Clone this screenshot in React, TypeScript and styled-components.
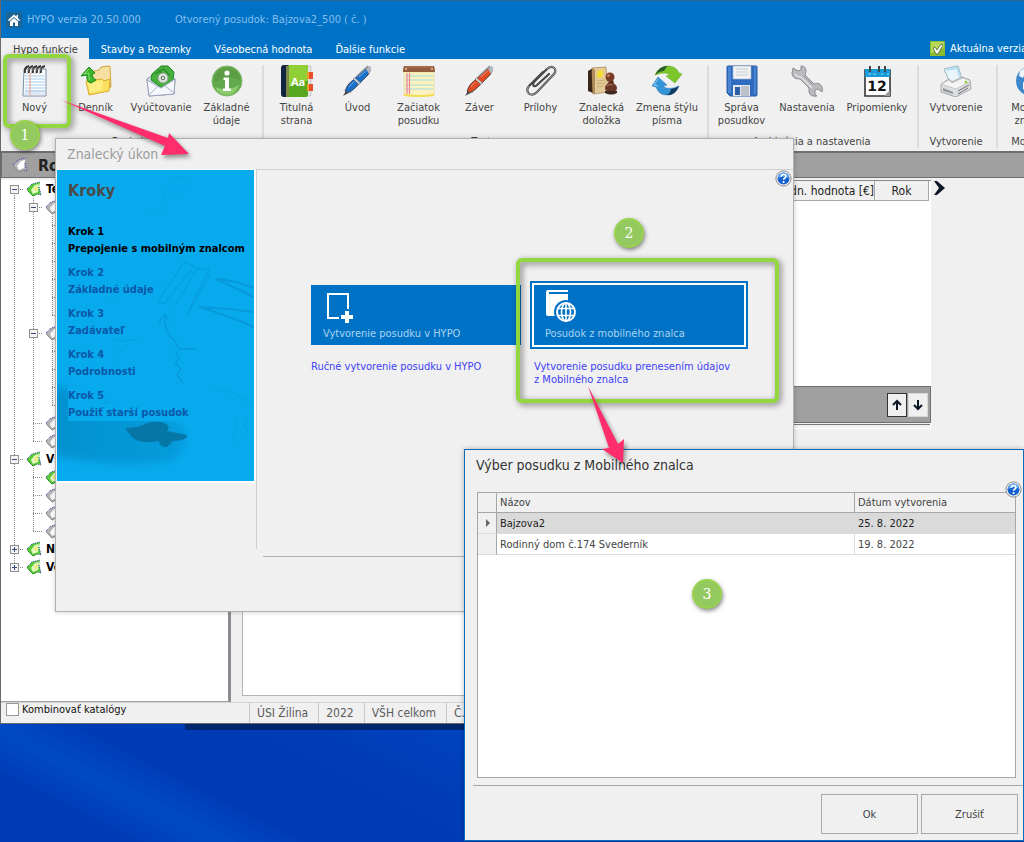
import React from 'react';
import styled, { createGlobalStyle, css } from 'styled-components';

const Global = createGlobalStyle`
  * { box-sizing: border-box; }
  body {
    margin: 0;
    font-family: "DejaVu Sans Condensed", "DejaVu Sans", sans-serif;
    font-size: 11px;
    line-height: 13px;
    color: #444;
  }
  button, input { font: inherit; color: inherit; }
  button { cursor: pointer; }
`;

const Desktop = styled.div`
  position: relative;
  min-height: 100vh;
  padding-bottom: 118px;
  display: flex;
  flex-direction: column;
  overflow: hidden;
  background:
    linear-gradient(#00266e, #00266e) 185px calc(100% - 112px) / 300px 6px no-repeat,
    linear-gradient(207deg, #0044c0 0%, #003cb8 26%, #003ab6 56%, #004ac6 69%, #003ab6 82%) 0 100% / 480px 118px no-repeat,
    #003ab6;
`;

/* ---------- main window ---------- */

const AppWindow = styled.main`
  flex: 1;
  display: flex;
  flex-direction: column;
  min-width: 0;
  background: #f0f0f0;
  border: 1px solid #6a6a6a;
  border-right: 0;
  border-top-color: #2a6898;
`;

const TitleBar = styled.header`
  height: 37px;
  padding-left: 5px;
  display: flex;
  align-items: center;
  background: #0072c6;
  color: #83bfee;
`;

const HomeButton = styled.button`
  width: 16px;
  height: 16px;
  padding: 0;
  border: 0;
  display: grid;
  place-items: center;
  background: #1c6594;
`;

const AppName = styled.span`
  width: 148px;
  margin-left: 5px;
  white-space: nowrap;
`;

const TabRow = styled.nav`
  height: 21px;
  display: flex;
  background: #0072c6;
  white-space: nowrap;
`;

const Tab = styled.button<{ $active?: boolean }>`
  padding: 1px 11px 0 12px;
  border: 0;
  background: ${(p) => (p.$active ? '#f0f0f0' : 'transparent')};
  color: ${(p) => (p.$active ? '#3c3c3c' : '#fff')};
`;

const VersionNote = styled.span`
  margin-left: auto;
  width: 94px;
  flex: none;
  display: flex;
  align-items: center;
  gap: 5px;
  overflow: hidden;
  color: #fff;
  svg { flex: none; }
`;

const Ribbon = styled.section`
  height: 92px;
  display: flex;
  padding: 6px 0 3px 1px;
  overflow: hidden;
`;

const RibbonGroup = styled.div`
  flex: none;
  display: flex;
  flex-direction: column;
  padding: 0 5px 0 2px;
  border-right: 2px solid #dcdcdc;
`;

const RibbonButtons = styled.div`
  flex: 1;
  display: flex;
`;

const RibbonButton = styled.button<{ $wide?: boolean }>`
  width: ${(p) => (p.$wide ? 70 : 61)}px;
  padding: 0;
  border: 0;
  background: none;
  display: flex;
  flex-direction: column;
  align-items: center;
  gap: 4px;
  white-space: pre-line;
  svg { flex: none; }
`;

const GroupCaption = styled.div`
  text-align: center;
  white-space: nowrap;
`;

const SectionBar = styled.div`
  height: 27px;
  padding-left: 8px;
  display: flex;
  align-items: center;
  gap: 10px;
  background: #a0a0a0;
  border: solid #6e6e6e;
  border-width: 2px 0 1px 1px;
  color: #222;
  font-size: 16px;
  font-weight: bold;
`;

const Workspace = styled.div`
  flex: 1;
  display: flex;
  padding-top: 2px;
  min-height: 0;
`;

const TreePanel = styled.aside`
  width: 230px;
  flex: none;
  background: #fff;
  border-right: 3px solid #8a8e92;
  border-bottom: 1px solid #a0a0a0;
`;

const TreeList = styled.ul`
  list-style: none;
  margin: 0;
  padding: 0 0 0 4px;
`;

const TreeRow = styled.li`
  height: 18px;
  display: flex;
  align-items: center;
  color: #000;
  font-weight: bold;
  white-space: nowrap;
  overflow: hidden;
`;

type Guide = 'full' | 'upper' | 'lower' | 'none';

const guideSize = { full: '100%', upper: '50%', lower: '50%', none: '0' };

const GuideCell = styled.span<{ $guide: Guide; $branch?: boolean }>`
  width: 19px;
  height: 18px;
  flex: none;
  display: grid;
  place-items: center;
  background:
    repeating-linear-gradient(#888 0 1px, transparent 1px 2px) 9px ${(p) => (p.$guide === 'lower' ? '100%' : '0')} / 1px ${(p) => guideSize[p.$guide]} no-repeat
    ${(p) => p.$branch && css`, repeating-linear-gradient(90deg, #888 0 1px, transparent 1px 2px) 9px 9px / 10px 1px no-repeat`};
`;

const Expander = styled.button`
  width: 9px;
  height: 9px;
  padding: 0;
  border: 1px solid #919191;
  background: #f4f4f4;
  display: grid;
  place-items: center;
`;

const TreeLabel = styled.span`
  margin-left: 4px;
  font-size: 12px;
`;

const NodeIcon = styled.svg`
  margin-left: 2px;
  flex: none;
`;

const Details = styled.section`
  flex: 1;
  min-width: 0;
  margin-left: 11px;
  display: flex;
  flex-direction: column;
  padding-bottom: 6px;
`;

const ListArea = styled.div`
  display: flex;
`;

const ListColumn = styled.div`
  flex: 1;
  min-width: 0;
`;

const ListSide = styled.div`
  width: 93px;
  flex: none;
`;

const ListBox = styled.div`
  height: 206px;
  padding-right: 2px;
  background: #fff;
  border-top: 1px solid #8a8a8a;
`;

const ValueTable = styled.table`
  width: 100%;
  border-collapse: collapse;
  th {
    height: 19px;
    padding: 2px 0 0;
    font-size: 12px;
    font-weight: normal;
    color: #222;
    text-align: right;
    background: #f0f0f0;
    border: solid #a8a8a8;
    border-width: 0 1px 1px 0;
  }
  th:last-child { width: 54px; text-align: center; }
`;

const MoveBar = styled.div`
  height: 37px;
  padding-right: 2px;
  display: flex;
  justify-content: flex-end;
  align-items: center;
  gap: 1px;
  background: #a0a0a0;
  border: 1px solid #6e6e6e;
`;

const BarRule = styled.div`
  height: 6px;
  border: solid #fff;
  border-width: 0 1px 1px 0;
  background: linear-gradient(#777, #777) 0 1px / 100% 1px no-repeat;
`;

const MoveButton = styled.button<{ $current?: boolean }>`
  width: 20px;
  height: 24px;
  padding: 0;
  display: grid;
  place-items: center;
  background: #f0f0f0;
  border: 1px solid ${(p) => (p.$current ? '#333' : '#d8d8d8')};
`;

const NextButton = styled.button`
  padding: 0;
  margin: 0 0 0 2px;
  border: 0;
  background: none;
  display: block;
`;

const EditorBox = styled.div`
  flex: 1;
  margin-top: 36px;
  background: #fff;
  border: solid #b4b4b4;
  border-width: 0 0 1px 1px;
`;

const StatusBar = styled.footer`
  height: 21px;
  display: flex;
  border-top: 1px solid #d4d4d4;
  font-size: 12px;
  color: #5c5c5c;
  overflow: hidden;
`;

const CheckLabel = styled.label`
  width: 248px;
  height: 13px;
  padding-left: 5px;
  display: flex;
  align-items: center;
  gap: 3px;
  font-size: 11px;
  line-height: 11px;
  color: #111;
  input {
    appearance: none;
    width: 13px;
    height: 13px;
    margin: 0;
    background: #fff;
    border: 1px solid #999;
  }
`;

const StatusCell = styled.span`
  padding: 4px 10px 0 7px;
  border-left: 1px solid #c8c8c8;
  white-space: nowrap;
`;

/* ---------- dialogs ---------- */

const TaskDialog = styled.section`
  position: absolute;
  left: 55px;
  top: 138px;
  width: 739px;
  height: 474px;
  display: flex;
  flex-direction: column;
  background: #f0f0f0;
  border: 1px solid #b0b0b0;
  box-shadow: 0 0 5px #0003;
`;

const DialogTitle = styled.h2<{ $muted?: boolean }>`
  margin: 0;
  height: 30px;
  padding: 0 11px;
  flex: none;
  font-size: 14px;
  line-height: 30px;
  font-weight: normal;
  color: ${(p) => (p.$muted ? '#9c9c9c' : '#333')};
`;

const HelpButton = styled.button`
  position: absolute;
  right: 1px;
  top: 31px;
  padding: 0;
  border: 0;
  background: none;
  display: block;
  svg { display: block; }
`;

const TaskBody = styled.div`
  display: flex;
  height: 380px;
  padding-left: 1px;
`;

const StepsPanel = styled.aside`
  position: relative;
  width: 199px;
  height: 314px;
  padding: 11px;
  border: solid #fff;
  border-width: 1px 2px 2px 0;
  background: #08aaee;
`;

const StepsArt = styled.svg`
  position: absolute;
  left: 0;
  top: 0;
`;

const StepsTitle = styled.h3`
  position: relative;
  margin: 0 0 22px;
  font-size: 16px;
  line-height: 20px;
  color: #4a4a4a;
`;

const StepList = styled.ol`
  position: relative;
  list-style: none;
  margin: 0;
  padding: 0;
  display: grid;
  gap: 7px;
`;

const Step = styled.li<{ $current?: boolean }>`
  line-height: 17px;
  font-weight: bold;
  white-space: nowrap;
  color: ${(p) => (p.$current ? '#000' : '#0a58a8')};
  div { width: max-content; background: #08aaee; }
`;

const ChoiceArea = styled.div`
  flex: 1;
  padding: 111px 45px 0 54px;
  border: solid #cfcfcf;
  border-width: 1px 0 0 1px;
  display: grid;
  grid-template-columns: 210px 218px;
  gap: 9px;
  align-items: start;
`;

const Choice = styled.div`
  display: flex;
  flex-direction: column;
`;

const ChoiceTile = styled.button<{ $selected?: boolean }>`
  height: ${(p) => (p.$selected ? 68 : 60)}px;
  margin: ${(p) => (p.$selected ? '0' : '4px 0')};
  padding: ${(p) => (p.$selected ? '7px 13px' : '7px 12px 5px')};
  display: flex;
  flex-direction: column;
  align-items: flex-start;
  justify-content: space-between;
  background: #0072c6;
  color: #a9d2f0;
  border: ${(p) => (p.$selected ? '2px solid #0072c6' : '0')};
  box-shadow: ${(p) => (p.$selected ? 'inset 0 0 0 2px #fff' : 'none')};
  svg { display: block; flex: none; }
`;

const ChoiceNote = styled.p<{ $inset?: boolean }>`
  margin: 11px 0 0 ${(p) => (p.$inset ? 4 : 0)}px;
  white-space: pre-line;
  color: #4040f8;
`;

const TaskRule = styled.hr`
  width: calc(100% - 207px);
  margin: 7px 0 0 207px;
  border: 0;
  border-top: 1px solid #b0b0b0;
`;

const PickDialog = styled.section`
  position: absolute;
  right: 0;
  top: 449px;
  width: 560px;
  height: 392px;
  display: flex;
  flex-direction: column;
  background: #f0f0f0;
  border: 1px solid #0a6cba;
  box-shadow: 0 0 5px #0004;
`;

const PickBody = styled.div`
  flex: 1;
  margin: 12px 7px 7px 12px;
  background: #fff;
  border: 1px solid #a6a6a6;
`;

const PickTable = styled.table`
  width: 100%;
  table-layout: fixed;
  border-collapse: separate;
  border-spacing: 0;
  text-align: left;
  th, td {
    height: 21px;
    padding: 0 0 0 3px;
    font-weight: normal;
    border: solid #dcdcdc;
    border-width: 0 0 1px 1px;
  }
  thead th {
    height: 20px;
    background: #f0f0f0;
    border-color: #a6a6a6;
  }
  th:first-child {
    width: 18px;
    padding: 0 0 0 7px;
    border-left: 0;
    background: #f0f0f0;
  }
  thead th:last-child { width: 161px; }
  td:nth-child(2) { border-left-color: #a6a6a6; }
`;

const PickRow = styled.tr<{ $selected?: boolean }>`
  td { background: ${(p) => (p.$selected ? '#dadada' : '#fff')}; }
  color: ${(p) => (p.$selected ? '#222' : '#444')};
`;

const PickActions = styled.footer`
  margin-left: 8px;
  padding: 8px 5px 6px;
  display: flex;
  justify-content: flex-end;
  gap: 3px;
  border-top: 1px solid #a6a6a6;
`;

const ActionButton = styled.button`
  width: 97px;
  height: 40px;
  background: #f0f0f0;
  border: 1px solid #a8a8a8;
`;

/* ---------- annotations ---------- */

const Highlight = styled.div<{ $x: number; $y: number; $w: number; $h: number }>`
  position: absolute;
  left: ${(p) => p.$x}px;
  top: ${(p) => p.$y}px;
  width: ${(p) => p.$w}px;
  height: ${(p) => p.$h}px;
  border: 4px solid #93d640;
  border-radius: 6px;
  filter: drop-shadow(2px 2px 3px #0008);
  pointer-events: none;
`;

const NumberBadge = styled.span<{ $x: number; $y: number }>`
  position: absolute;
  left: ${(p) => p.$x}px;
  top: ${(p) => p.$y}px;
  width: 30px;
  height: 30px;
  border-radius: 50%;
  background: #94c95f;
  border: 2px solid #98d34c;
  box-shadow: 1px 2px 4px #0007;
  color: #fff;
  font: 14px/26px "DejaVu Serif", serif;
  text-align: center;
`;

const Arrows = styled.svg`
  position: absolute;
  left: 0;
  top: 0;
  filter: drop-shadow(2px 3px 2px #0006);
  pointer-events: none;
`;

/* ---------- icons ---------- */

const Icon = ({ children }: { children: React.ReactNode }) => (
  <svg width="32" height="32" viewBox="0 0 32 32" aria-hidden="true">{children}</svg>
);

const NotepadIcon = () => (
  <Icon>
    <path d="M5 4h22v27H4z" fill="#fff" stroke="#7d8fa8" />
    <path d="M6 25h20v5H5z" fill="#e0e8f4" />
    <path d="M6 11h20M6 14h20M6 17h20M6 20h20M6 23h20M6 26h20" stroke="#9fcaf0" strokeWidth="1" />
    <path d="M11 8v22" stroke="#f09a80" />
    <path d="M6 8q-1-6 4-7M10 8q-1-6 4-7M14 8q-1-6 4-7M18 8q-1-6 4-7M22 8q-1-6 4-7" fill="none" stroke="#333" strokeWidth="1.900" />
    <path d="M8 9q0-5 4-6M12 9q0-5 4-6M16 9q0-5 4-6M20 9q0-5 4-6" fill="none" stroke="#999" strokeWidth=".8" />
  </Icon>
);

const FolderIcon = () => (
  <Icon>
    <path d="M11 7l8-2 2-3 9-1 1 21-20 7z" fill="#f5e0a0" stroke="#d2a53c" />
    <path d="M6 16l16-2 2 2 6-2-1 12-20 4z" fill="#fbe060" stroke="#d9ac2c" />
    <path d="M8 18l15-3-1 10-12 3z" fill="#fdf08c" opacity=".8" />
    <path d="M11 18q-5-1-4-8l-6 1 8-9 6 6-3 1q0 4 4 6z" fill="#3cb52c" stroke="#1d8a18" />
    <path d="M9 4l-5 5 5-1q-1 4 1 7" fill="none" stroke="#8be070" />
  </Icon>
);

const EnvelopeIcon = () => (
  <Icon>
    <path d="M2 14L16 4l14 10-1 15-25 2z" fill="#dce4f2" stroke="#8791a8" />
    <path d="M7 9l9-8h7l6 6-1 8-11 8-11-8z" fill="#47b03c" stroke="#218a26" />
    <path d="M10 9l9-5 6 7M13 5l10 9" fill="none" stroke="#2a8a2c" strokeWidth="1.200" />
    <circle cx="18" cy="13" r="5" fill="#dfe7df" stroke="#8ba08b" />
    <circle cx="18" cy="13" r="1.800" fill="none" stroke="#5c6e5c" />
    <path d="M2 15l14 8 14-9-1 15-25 2z" fill="#f6f8fd" stroke="#9aa4bc" />
    <path d="M4 30l9-9M29 28l-9-7" stroke="#aab4ca" />
  </Icon>
);

const InfoIcon = () => (
  <Icon>
    <circle cx="16" cy="16" r="15" fill="#62a84c" stroke="#7db86a" />
    <path d="M3 17a13 13 0 0 1 26-2Q20 9 3 17z" fill="#5c9c44" />
    <path d="M4 22q12 5 24-2-3 10-12 10T4 22z" fill="#93d36f" opacity=".8" />
    <circle cx="16" cy="8" r="2.600" fill="#fff" />
    <path d="M12.500 12.500h5.500v11h2V26h-8v-2.500h2V15h-1.500z" fill="#fff" />
  </Icon>
);

const BookIcon = () => (
  <Icon>
    <rect x="24" y="1" width="6" height="30" rx="1" fill="#e2e2e2" stroke="#b5b5b5" strokeWidth=".6" />
    <rect x="1" y="0" width="26" height="32" rx="2" fill="#57a81e" />
    <path d="M8 0h17a2 2 0 0 1 2 2v14Q18 15 8 22z" fill="#90cf35" />
    <path d="M3 0h4v32H3q-3 0-3-3V3q0-3 3-3z" fill="#12243f" />
    <path d="M5 1h3v31H5z" fill="#7d8a48" />
    <rect x="26" y="7" width="6" height="7" fill="#e8502c" />
    <rect x="26" y="19" width="6" height="7" fill="#e8502c" />
    <path d="M27 7v7M27 19v7" stroke="#f0a020" strokeWidth="2" />
    <text x="10" y="21" fontSize="11" fontWeight="bold" fill="#fff" fontFamily="Open Sans, sans-serif">Aa</text>
  </Icon>
);

const PenIcon = ({ body, light }: { body: string; light: string }) => (
  <Icon>
    <path d="M2 30l3-7 5 4z" fill="#9a9ea4" />
    <path d="M3 26Q5 19 11 15L22 5q4-3 6-2 1 3-2 7L16 20Q11 26 5 28z" fill={body} stroke="#3a3d42" strokeWidth=".8" />
    <path d="M11 14l6 5.500 1.500-1.500-6-5.500z" fill="#d0d4da" stroke="#555" strokeWidth=".4" />
    <path d="M24 4l3-3q3 0 2 4l-2 4z" fill="#b4b9c1" />
    <path d="M15 11L26 1" stroke="#8d939b" strokeWidth="1.600" />
    <path d="M7 22q2-3 5-5M17 12l7-6" fill="none" stroke={light} strokeWidth="1" opacity=".7" />
    <path d="M1 31l3-5 2 2z" fill="#444" />
  </Icon>
);

const PadIcon = () => (
  <Icon>
    <path d="M1 7h30v23q-15 2-30 0z" fill="#fbf2c0" stroke="#e2d590" strokeWidth=".6" />
    <path d="M1 29q15 2 30 0v2q-15 2-30 0z" fill="#f3dc50" />
    <path d="M2 11h28M2 15h28M2 20h28M2 24h28" stroke="#a4dadb" />
    <path d="M4 8v21M6.500 8v21" stroke="#f0809a" strokeWidth="1.200" />
    <path d="M1 1h30q1 3 1 6H0q0-4 1-6z" fill="#925c3e" />
    <path d="M2 1h28v2H2z" fill="#a66c4a" />
    <circle cx="3" cy="4" r="1" fill="#e8c090" /><circle cx="29" cy="4" r="1" fill="#e8c090" />
  </Icon>
);

const ClipIcon = () => (
  <Icon>
    <path d="M24 9L12 20c-3 3-5 0-3-3L22 4c5-5 11 0 7 5L12 27c-6 6-13 0-8-6L18 7" fill="none" stroke="#484848" strokeWidth="2.200" strokeLinecap="round" />
    <path d="M22 4c5-5 11 0 7 5L12 27c-6 6-13 0-8-6" fill="none" stroke="#bdbdbd" strokeWidth=".7" />
  </Icon>
);

const StampIcon = () => (
  <Icon>
    <path d="M2 6l5-3v25l-5-2z" fill="#3c2618" />
    <path d="M6 3l14-1 2 25-15 2z" fill="#e4c998" stroke="#a28250" strokeWidth=".7" />
    <path d="M6 3l3 2v24l-2 0z" fill="#b08c58" />
    <path d="M11 6l6-1v6l-3 2-3-1z" fill="#f3dc34" />
    <path d="M11 16l8-1M11 19l8-1M11 22l6-1" stroke="#ccae78" />
    <path d="M23 14h4l1 5h-6z" fill="#5a2b1a" />
    <circle cx="24" cy="12" r="4.500" fill="#7c3b24" /><circle cx="22.500" cy="10.500" r="1.500" fill="#c08068" />
    <ellipse cx="25" cy="23" rx="6" ry="5" fill="#6a3828" />
    <path d="M19 26h12v2q-6 3-12 0z" fill="#3d2822" />
    <path d="M21 21q3-3 6-1" fill="none" stroke="#a87464" />
  </Icon>
);

const RefreshIcon = () => (
  <Icon>
    <path d="M4 10Q8 1 17 1q8 0 11 7l3 1-7 9-9-7 4-1q-4-4-15 0z" fill="#7cc82c" stroke="#5aa41e" strokeWidth=".5" />
    <path d="M4 10Q8 1 17 1q-3 2-4 5-4 0-9 4z" fill="#2b5c26" />
    <path d="M28 21q-4 10-13 9-7 0-10-8l-4-1 6-9 9 8-4 1q5 5 16 0z" fill="#3494d8" stroke="#1b70b4" strokeWidth=".5" />
    <path d="M28 21q-4 10-13 9 5-2 5-6 4 0 8-3z" fill="#12365c" />
    <path d="M7 14l-4 6 4 1" fill="none" stroke="#90d0f4" />
  </Icon>
);

const DiskIcon = () => (
  <Icon>
    <path d="M2 1h28q1 0 1 1v28q0 1-1 1H4l-3-3V2q0-1 1-1z" fill="#2f6cc0" stroke="#2a5ea8" />
    <path d="M2 2h3v26H2zM28 2h2v27h-2z" fill="#4a86d4" />
    <path d="M7 1h18v13H7z" fill="#f0f1f3" stroke="#9fb0c8" strokeWidth=".6" />
    <path d="M10 4h12M10 7h12M10 10h12" stroke="#c9ccd0" />
    <path d="M7 20h17v11H7z" fill="#e4e7ec" />
    <path d="M9 22h5v8H9z" fill="#2b5ea8" />
    <path d="M15 21h8v10h-8z" fill="#bcc2cc" />
  </Icon>
);

const WrenchIcon = () => (
  <Icon>
    <path d="M2 3l5 3 3-1 0-4q5 0 5 5l-1 4 9 9q6-2 8 3 1 3 0 5l-4-3-3 1 0 4 2 2q-7 1-8-4l0-4-9-9Q1 14 1 8z" fill="#b9bbbe" stroke="#8b8d90" />
    <path d="M4 9q3 4 6 3l11 11" fill="none" stroke="#e0e2e4" strokeWidth="1.500" />
    <path d="M13 11l9 9" stroke="#9c9ea2" />
  </Icon>
);

const CalendarIcon = () => (
  <Icon>
    <path d="M4 5h25v26H4z" fill="#fff" stroke="#333" strokeWidth="1.600" />
    <path d="M4 4h25v8H4z" fill="#189bd8" />
    <path d="M9 1v6M18 1v6M24 1v6" stroke="#444" strokeWidth="2" />
    <path d="M7 9h3M12 9h3M20 9h2M26 9h2" stroke="#8fd8f4" />
    <path d="M23 31l6-6v6z" fill="#9a9a9a" />
    <text x="16" y="26" fontSize="14" fontWeight="bold" textAnchor="middle" fill="#111" fontFamily="DejaVu Sans, sans-serif" textRendering="geometricPrecision">12</text>
  </Icon>
);

const PrinterIcon = () => (
  <Icon>
    <path d="M4 4l14-3 4 13-12 4z" fill="#e9f5fa" stroke="#9ab4c2" />
    <path d="M7 5l10-2 3 9" fill="none" stroke="#b4dff2" strokeWidth="2" />
    <path d="M1 19l8-5 3 3 10-5 8 3 1 9-15 8L1 27z" fill="#dcdddf" stroke="#94979a" strokeWidth=".8" />
    <path d="M1 19l15 5 15-8-8-3-11 5-3-3z" fill="#f4f4f4" stroke="#b0b2b4" strokeWidth=".6" />
    <path d="M18 26l11-6M18 29l10-6" stroke="#6c6f72" />
    <path d="M3 23l10 4v2L3 26z" fill="#94979a" />
    <circle cx="26" cy="17" r="1.300" fill="#7fd020" />
  </Icon>
);

const GlobeIcon = () => (
  <Icon>
    <circle cx="16" cy="16" r="15" fill="#3f87cc" />
    <path d="M5 6q6-5 12-4l-3 5-4 1-2 5-4-2zM8 17l8 2-3 9-5-4z" fill="#eef5fa" />
  </Icon>
);

const HomeIcon = () => (
  <svg width="14" height="14" viewBox="0 0 14 14" aria-hidden="true">
    <path d="M7 1.500L1 7l1 1.200L7 4l5 4.200L13 7l-2-1.800V2H9.500v1.700z" fill="#fff" />
    <path d="M7 5l4 3.500V13H8V9.500H6V13H3V8.500z" fill="#fff" />
  </svg>
);

const CheckIcon = () => (
  <svg width="15" height="15" viewBox="0 0 15 15" aria-hidden="true">
    <path d="M0 0h15v15H0z" fill="#8bbb32" /><path d="M1 1h13v6L1 12z" fill="#b7d955" />
    <path d="M3 7l2-1 2 3 4-6 2 1-5 9H6z" fill="#fff" stroke="#47602c" strokeWidth=".8" />
  </svg>
);

const HelpIcon = () => (
  <svg width="17" height="17" viewBox="0 0 17 17" aria-hidden="true">
    <circle cx="8.500" cy="8.500" r="7.600" fill="#f3f3f3" stroke="#8c8c8c" />
    <circle cx="8.500" cy="8.500" r="6" fill="#1560d0" />
    <path d="M3 8a5.500 5.500 0 0 1 11 0Q8 5 3 8z" fill="#61a9ee" />
    <path d="M6.300 6.800q0-2.300 2.300-2.300t2.200 1.900q0 1.200-1.300 1.900-.9.500-.9 1.400" fill="none" stroke="#fff" strokeWidth="1.700" />
    <circle cx="8.600" cy="12" r="1.100" fill="#fff" />
  </svg>
);

const TreeIcon = ({ green }: { green?: boolean }) => (
  <NodeIcon width="16" height="16" viewBox="0 0 16 16" aria-hidden="true">
    <path d="M1 8l5-5 8-2-1 5 2 8-4-1-4 2-4-4z" fill={green ? '#58cc34' : '#b4b4b4'} />
    <path d="M5 9l4-5 4-1-1 8-5 2z" fill={green ? '#e2f7c4' : '#fff'} />
    {green && <path d="M9 6l3-1-1 5-3 0z" fill="#f0e878" />}
    <path d="M1 8l5-5 8-2M13 6l2 8-4-1" fill="none" stroke="#3440b0" strokeDasharray="1 1" />
    <path d="M1 8l2 3 4 4 4-2" fill="none" stroke={green ? '#2c8c2c' : '#8a8a8a'} />
  </NodeIcon>
);

const ArrowIcon = ({ down }: { down?: boolean }) => (
  <svg width="10" height="12" viewBox="0 0 10 12" aria-hidden="true">
    <path d={down ? 'M5 1v9M1 6l4 4 4-4' : 'M5 11V2M1 6l4-4 4 4'} fill="none" stroke="#0b1626" strokeWidth="2" />
  </svg>
);

/* ---------- data ---------- */

type RibbonItem = { label: string; icon: React.ReactNode; wide?: boolean };

const ribbon: { caption: string; items: RibbonItem[] }[] = [
  {
    caption: 'Funkcie',
    items: [
      { label: 'Nový', icon: <NotepadIcon /> },
      { label: 'Denník', icon: <FolderIcon /> },
      { label: 'Vyúčtovanie', icon: <EnvelopeIcon />, wide: true },
      { label: 'Základné\núdaje', icon: <InfoIcon /> },
    ],
  },
  {
    caption: 'Texty',
    items: [
      { label: 'Titulná\nstrana', icon: <BookIcon /> },
      { label: 'Úvod', icon: <PenIcon body="#1c6fc8" light="#8cc4f4" /> },
      { label: 'Začiatok\nposudku', icon: <PadIcon /> },
      { label: 'Záver', icon: <PenIcon body="#e04a24" light="#f8a88c" /> },
      { label: 'Prílohy', icon: <ClipIcon /> },
      { label: 'Znalecká\ndoložka', icon: <StampIcon /> },
      { label: 'Zmena štýlu\npísma', icon: <RefreshIcon />, wide: true },
    ],
  },
  {
    caption: 'Archivácia a nastavenia',
    items: [
      { label: 'Správa\nposudkov', icon: <DiskIcon /> },
      { label: 'Nastavenia', icon: <WrenchIcon />, wide: true },
      { label: 'Pripomienky', icon: <CalendarIcon />, wide: true },
    ],
  },
  { caption: 'Vytvorenie', items: [{ label: 'Vytvorenie', icon: <PrinterIcon />, wide: true }] },
  { caption: 'Mobilný', items: [{ label: 'Mobilný\nznalec', icon: <GlobeIcon /> }] },
];

type Node = { guides: Guide[]; sign?: '+' | '-'; icon?: 'green' | 'grey'; label?: string };

const leaves = (count: number, guides: Guide[], icon?: Node['icon']): Node[] =>
  Array.from({ length: count }, (_, i) => ({
    guides: [...guides, i === count - 1 ? 'upper' : 'full'],
    icon,
  }));

const tree: Node[] = [
  { guides: ['lower'], sign: '-', icon: 'green', label: 'Technická hodnota' },
  { guides: ['full', 'full'], sign: '-', icon: 'grey' },
  ...leaves(6, ['full', 'full']),
  { guides: ['full', 'full'], sign: '-', icon: 'grey' },
  ...leaves(4, ['full', 'full']),
  ...leaves(2, ['full'], 'grey'),
  { guides: ['full'], sign: '-', icon: 'green', label: 'Všeobecná hodnota' },
  { guides: ['full', 'full'], icon: 'green' },
  ...leaves(3, ['full'], 'grey'),
  { guides: ['full'], sign: '+', icon: 'green', label: 'Náklady' },
  { guides: ['upper'], sign: '+', icon: 'green', label: 'Vecné bremená' },
];

const steps = [
  ['Krok 1', 'Prepojenie s mobilným znalcom'],
  ['Krok 2', 'Základné údaje'],
  ['Krok 3', 'Zadávateľ'],
  ['Krok 4', 'Podrobnosti'],
  ['Krok 5', 'Použiť starší posudok'],
];

const reports = [
  { name: 'Bajzova2', date: '25. 8. 2022' },
  { name: 'Rodinný dom č.174 Svederník', date: '19. 8. 2022' },
];

/* ---------- parts ---------- */

const Tree = () => (
  <TreePanel>
    <TreeList>
      {tree.map((node, i) => (
        <TreeRow key={i}>
          {node.guides.map((guide, depth) => {
            const last = depth === node.guides.length - 1;
            return (
              <GuideCell key={depth} $guide={guide} $branch={last}>
                {last && node.sign && (
                  <Expander aria-label={node.sign === '+' ? 'Rozbaliť' : 'Zbaliť'}>
                    <svg width="7" height="7" viewBox="0 0 7 7" aria-hidden="true">
                      <path d={node.sign === '+' ? 'M1 3.500h5M3.500 1v5' : 'M1 3.500h5'} stroke="#3a4a80" />
                    </svg>
                  </Expander>
                )}
              </GuideCell>
            );
          })}
          {node.icon && <TreeIcon green={node.icon === 'green'} />}
          {node.label && <TreeLabel>{node.label}</TreeLabel>}
        </TreeRow>
      ))}
    </TreeList>
  </TreePanel>
);

const StepsDrawing = () => (
  <StepsArt width="197" height="311" viewBox="0 0 197 311" aria-hidden="true">
    <defs>
      <linearGradient id="sleeve" x1="0" x2="1">
        <stop offset="0" stopColor="#0680ba" stopOpacity=".6" />
        <stop offset="1" stopColor="#0680ba" stopOpacity=".35" />
      </linearGradient>
      <filter id="soft" x="-10%" y="-20%" width="120%" height="140%"><feGaussianBlur stdDeviation="4" /></filter>
    </defs>
    <path d="M-10 214q40 8 75 30 52-2 64 18 2 22-18 30-60 6-122-8z" fill="url(#sleeve)" filter="url(#soft)" />
    <path d="M68 258q10 0 18-3 10-6 22-2 6 4 2 8l20 4q2 5-14 6l-6 6q-8 0-8-6-20 4-28-5z" fill="#056892" opacity=".7" />
    <g fill="none" stroke="#0688c4" opacity=".5">
      <path d="M101 132l26-40 10 4-30 38zM118 136l22-38 12 2-20 40M130 145l24-42" />
      <path d="M197 118q-20-8-38-9 18 8 38 18M197 142q-28-4-55-5 28 8 55 20" strokeWidth="2" />
      <path d="M102 152l6-8 4 7m-4-6q-2 16 10 26l4 8h18m-22 2l4 8-4 4 6 6-4 6 6 8" strokeWidth="1.400" />
      <path d="M92 45l18-12m0 6q-8-20 12-32 14 2 4 14l-14 10M94 46l16-4" opacity=".4" />
      <path d="M56 112q6-4 4 6l-6 14m4 24l10 4m-14 8q20 6 28 0m-24 10l8 4m-8 6l6 8" opacity=".8" />
      <path d="M155 220q20-2 42 16M176 246l4 4-4 4 4 4-4 6 4 8m8-26l2 5-3 4 4 4-3 6" opacity=".6" />
    </g>
  </StepsArt>
);

const NewTaskDialog = () => (
  <TaskDialog aria-label="Znalecký úkon">
    <DialogTitle $muted>Znalecký úkon</DialogTitle>
    <TaskBody>
      <StepsPanel>
        <StepsDrawing />
        <StepsTitle>Kroky</StepsTitle>
        <StepList>
          {steps.map(([number, name], i) => (
            <Step key={number} $current={i === 0}>
              <div>{number}</div>
              <div>{name}</div>
            </Step>
          ))}
        </StepList>
      </StepsPanel>
      <ChoiceArea>
        <Choice>
          <ChoiceTile>
            <svg width="32" height="32" viewBox="0 0 32 32" aria-hidden="true">
              <path d="M16 26H5V2h20v15" fill="none" stroke="#fff" strokeWidth="2" />
              <path d="M24 19v12M18 25h12" stroke="#fff" strokeWidth="4" />
            </svg>
            Vytvorenie posudku v HYPO
          </ChoiceTile>
          <ChoiceNote>Ručné vytvorenie posudku v HYPO</ChoiceNote>
        </Choice>
        <Choice>
          <ChoiceTile $selected>
            <svg width="32" height="32" viewBox="0 0 32 32" aria-hidden="true">
              <path d="M3 0h20v2H4v2h19v22H3q-2 0-2-2V2q0-2 2-2z" fill="#fff" />
              <circle cx="21" cy="22" r="12" fill="#0072c6" />
              <circle cx="21" cy="22" r="9" fill="none" stroke="#fff" strokeWidth="2" />
              <ellipse cx="21" cy="22" rx="4.500" ry="9" fill="none" stroke="#fff" strokeWidth="1.600" />
              <path d="M21 13v18M13 18.500h16M13 25.500h16" stroke="#fff" strokeWidth="1.600" />
            </svg>
            Posudok z mobilného znalca
          </ChoiceTile>
          <ChoiceNote $inset>{'Vytvorenie posudku prenesením údajov\nz Mobilného znalca'}</ChoiceNote>
        </Choice>
      </ChoiceArea>
    </TaskBody>
    <TaskRule />
    <HelpButton aria-label="Pomoc"><HelpIcon /></HelpButton>
  </TaskDialog>
);

const PickReportDialog = () => (
  <PickDialog aria-label="Výber posudku z Mobilného znalca">
    <DialogTitle>Výber posudku z Mobilného znalca</DialogTitle>
    <PickBody>
      <PickTable>
        <thead>
          <tr>
            <th aria-label="Výber" />
            <th scope="col">Názov</th>
            <th scope="col">Dátum vytvorenia</th>
          </tr>
        </thead>
        <tbody>
          {reports.map((report, i) => (
            <PickRow key={report.name} $selected={i === 0}>
              <th scope="row" aria-label={report.name}>
                {i === 0 && (
                  <svg width="5" height="8" viewBox="0 0 5 8" aria-hidden="true"><path d="M1 0l4 4-4 4z" fill="#666" /></svg>
                )}
              </th>
              <td>{report.name}</td>
              <td>{report.date}</td>
            </PickRow>
          ))}
        </tbody>
      </PickTable>
    </PickBody>
    <PickActions>
      <ActionButton>Ok</ActionButton>
      <ActionButton>Zrušiť</ActionButton>
    </PickActions>
    <HelpButton aria-label="Pomoc"><HelpIcon /></HelpButton>
  </PickDialog>
);

export default function App() {
  return (
    <>
      <Global />
      <Desktop>
        <AppWindow>
          <TitleBar>
            <HomeButton aria-label="Domov"><HomeIcon /></HomeButton>
            <AppName>HYPO verzia 20.50.000</AppName>
            <span>Otvorený posudok: Bajzova2_500 ( č. )</span>
          </TitleBar>
          <TabRow>
            <Tab $active>Hypo funkcie</Tab>
            <Tab>Stavby a Pozemky</Tab>
            <Tab>Všeobecná hodnota</Tab>
            <Tab>Ďalšie funkcie</Tab>
            <VersionNote><CheckIcon />Aktuálna verzia</VersionNote>
          </TabRow>
          <Ribbon>
            {ribbon.map((group) => (
              <RibbonGroup key={group.caption}>
                <RibbonButtons>
                  {group.items.map((item) => (
                    <RibbonButton key={item.label} $wide={item.wide}>
                      {item.icon}
                      {item.label}
                    </RibbonButton>
                  ))}
                </RibbonButtons>
                <GroupCaption>{group.caption}</GroupCaption>
              </RibbonGroup>
            ))}
          </Ribbon>
          <SectionBar><TreeIcon />Rodinný dom</SectionBar>
          <Workspace>
            <Tree />
            <Details>
              <ListArea>
                <ListColumn>
                  <ListBox>
                    <ValueTable>
                      <thead>
                        <tr>
                          <th scope="col">Jedn. hodnota [€]</th>
                          <th scope="col">Rok</th>
                        </tr>
                      </thead>
                    </ValueTable>
                  </ListBox>
                  <MoveBar>
                    <MoveButton $current aria-label="Vyššie"><ArrowIcon /></MoveButton>
                    <MoveButton aria-label="Nižšie"><ArrowIcon down /></MoveButton>
                  </MoveBar>
                  <BarRule />
                </ListColumn>
                <ListSide>
                  <NextButton aria-label="Ďalej">
                    <svg width="14" height="16" viewBox="0 0 14 16" aria-hidden="true">
                      <path d="M1 1h3l8 7-8 7H1l5-7z" fill="#0f1a26" />
                    </svg>
                  </NextButton>
                </ListSide>
              </ListArea>
              <EditorBox />
            </Details>
          </Workspace>
          <StatusBar>
            <CheckLabel><input type="checkbox" />Kombinovať katalógy</CheckLabel>
            <StatusCell>ÚSI Žilina</StatusCell>
            <StatusCell>2022</StatusCell>
            <StatusCell>VŠH celkom</StatusCell>
            <StatusCell>Č. posudku</StatusCell>
          </StatusBar>
        </AppWindow>

        <NewTaskDialog />
        <PickReportDialog />

        <Highlight $x={3} $y={54} $w={68} $h={74} />
        <Highlight $x={516} $y={258} $w={263} $h={145} />
        <NumberBadge $x={10} $y={120}>1</NumberBadge>
        <NumberBadge $x={614} $y={218}>2</NumberBadge>
        <NumberBadge $x={692} $y={579}>3</NumberBadge>
        <Arrows width="640" height="480" viewBox="0 0 640 480" aria-hidden="true">
          <path d="M61 100L168 138l1-5 20 21-28 1 4-9z" fill="#ff2d6b" />
          <path d="M588 386l30 58 6-5-1 24-21-14 7-1z" fill="#ff2d6b" />
        </Arrows>
      </Desktop>
    </>
  );
}
